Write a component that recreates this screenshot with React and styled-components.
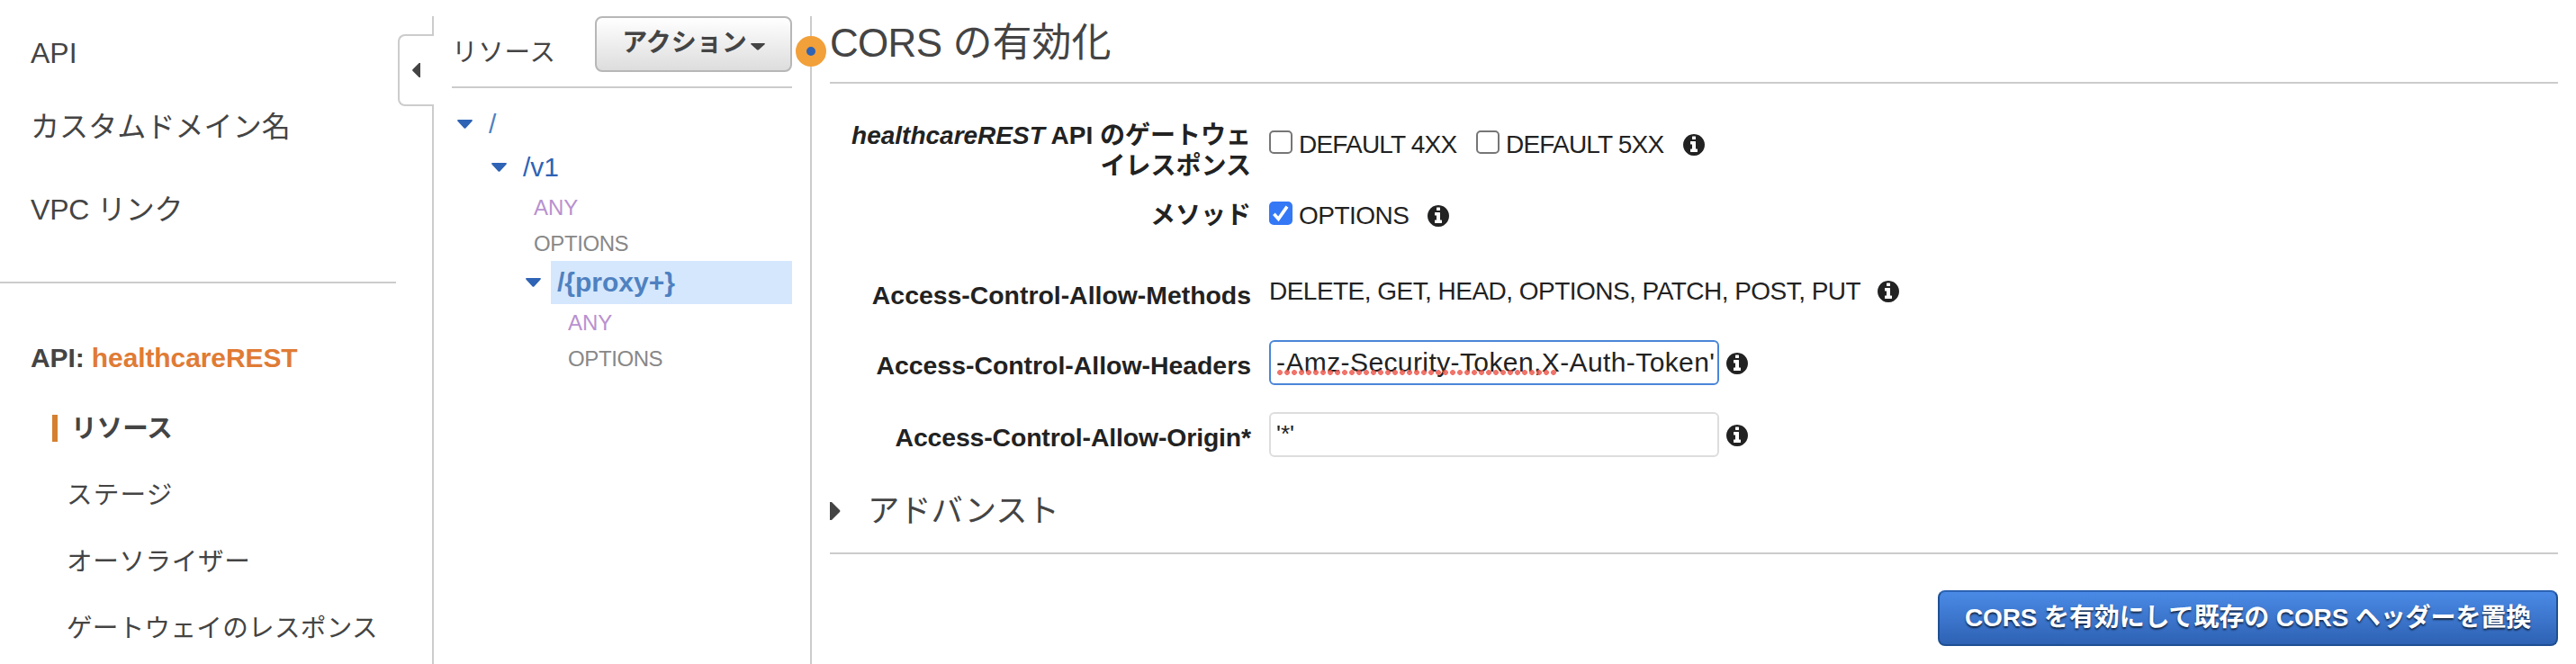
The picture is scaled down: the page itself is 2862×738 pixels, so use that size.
import React from "react";
import styled, { createGlobalStyle } from "styled-components";

const GlobalStyle = createGlobalStyle`
  * { box-sizing: border-box; }
  html, body { margin: 0; padding: 0; background: #fff; }
  body {
    overflow: hidden;
    font-family: "Liberation Sans", "Noto Sans CJK JP", sans-serif;
    color: #444;
  }
`;

const Page = styled.div`
  display: flex;
  width: 2862px;
  height: 738px;
  padding-top: 18px;
  overflow: hidden;
`;

const Sidebar = styled.nav`
  width: 442px;
  flex: none;
`;

const TopLinks = styled.div`
  display: flex;
  flex-direction: column;
  height: 295px;
  padding: 21px 0 0 34px;
`;

const TopLink = styled.a`
  font-size: 32px;
  line-height: 40px;
  letter-spacing: ${(p) => p.$spacing || 0}px;
  margin-bottom: ${(p) => p.$after || 0}px;
  white-space: nowrap;
`;

const Rule = styled.hr`
  width: ${(p) => p.$width || "100%"};
  height: 2px;
  margin: 0;
  border: 0;
  background: #ccc;
`;

const ApiName = styled.h2`
  margin: 63px 0 41px 34px;
  font-size: 30px;
  font-weight: 700;
  line-height: 40px;
  letter-spacing: -0.1px;
  white-space: nowrap;

  span { color: #e07b35; }
`;

const SubLinks = styled.div`
  display: flex;
  flex-direction: column;
  gap: 40px;
`;

const SubLink = styled.a`
  display: flex;
  align-items: center;
  height: 34px;
  padding-left: 74px;
  font-size: 28.6px;
  line-height: 34px;
  letter-spacing: ${(p) => p.$spacing || 0}px;
  white-space: nowrap;
`;

const ActiveLink = styled(SubLink)`
  padding-left: 58px;
  font-weight: 700;

  &::before {
    content: "";
    width: 6px;
    height: 30px;
    margin-right: 15px;
    background: #d58030;
  }
`;

const Divider = styled.div`
  display: flex;
  flex-direction: column;
  flex: none;
  width: 40px;
`;

const DividerLine = styled.div`
  height: ${(p) => p.$height || "auto"};
  flex: ${(p) => (p.$height ? "none" : 1)};
  border-right: 2px solid #ccc;
`;

const CollapseTab = styled.button`
  display: flex;
  align-items: center;
  height: 80px;
  padding: 0 0 0 14px;
  border: 2px solid #ccc;
  border-right: 0;
  border-radius: 8px 0 0 8px;
  background: #fff;
`;

const Tree = styled.section`
  width: 420px;
  flex: none;
  border-right: 2px solid #ccc;
  padding: 0 20px;
`;

const TreeHeader = styled.header`
  display: flex;
  justify-content: space-between;
  height: 78px;
`;

const TreeTitle = styled.h3`
  margin: 23px 0 0;
  font-size: 28.6px;
  font-weight: 400;
  line-height: 34px;
  letter-spacing: 0.7px;
  white-space: nowrap;
`;

const ActionButton = styled.button`
  display: flex;
  align-items: center;
  justify-content: center;
  gap: 4px;
  width: 219px;
  height: 62px;
  padding: 0 0 2px;
  border: 2px solid #b7b7b7;
  border-radius: 8px;
  background: linear-gradient(#fff, #ddd);
  color: #444;
  font: 700 28px/34px "Liberation Sans", "Noto Sans CJK JP", sans-serif;
  white-space: nowrap;

  svg { margin-top: 8px; }
`;

const TreeList = styled.div`
  padding-top: 16px;
`;

const TreeNode = styled.div`
  display: flex;
  align-items: center;
  height: 48px;
  padding-left: ${(p) => 6 + p.$depth * 38}px;
`;

const NodeName = styled.div`
  flex: 1;
  height: 48px;
  margin-left: 11px;
  padding-left: 7px;
  font-size: 30px;
  line-height: 48px;
  color: ${(p) => (p.$light ? "#4f81c0" : "#2e63b5")};
  font-weight: ${(p) => (p.$selected ? 700 : 400)};
  background: ${(p) => (p.$selected ? "#d5e7fd" : "transparent")};
`;

const Method = styled.div`
  height: 40px;
  padding-left: ${(p) => 53 + p.$depth * 38}px;
  font-size: 24px;
  line-height: 41px;
  letter-spacing: ${(p) => (p.$any ? 0 : -0.4)}px;
  color: ${(p) => (p.$any ? "#b991cf" : "#888")};
`;

const Main = styled.main`
  position: relative;
  flex: none;
  width: 1960px;
  padding: 0 20px;
`;

const Handle = styled.span`
  position: absolute;
  left: -18px;
  top: 22px;
  width: 34px;
  height: 34px;
  border: 12px solid #f2a03a;
  border-radius: 50%;
  background: #2e63b5;
`;

const Title = styled.h1`
  height: 73px;
  margin: 0;
  font-size: 44px;
  font-weight: 400;
  line-height: 60px;
  white-space: nowrap;

  span { letter-spacing: -0.7px; }
`;

const FormRow = styled.div`
  display: flex;
  align-items: flex-start;
  gap: 20px;
  height: ${(p) => p.$height}px;
  margin-top: ${(p) => p.$top}px;
  color: #222;
`;

const Label = styled.label`
  width: 468px;
  padding-top: ${(p) => p.$drop || 0}px;
  font-size: ${(p) => p.$size || 28.4}px;
  font-weight: 700;
  line-height: 34px;
  letter-spacing: ${(p) => p.$spacing || 0}px;
  text-align: right;
  white-space: nowrap;
`;

const Field = styled.div`
  display: flex;
  align-items: flex-start;
  padding-top: ${(p) => p.$drop || 0}px;
  font-size: 28px;
  line-height: 34px;
  white-space: nowrap;
`;

const CheckBox = styled.span`
  display: flex;
  width: 26px;
  height: 26px;
  margin: 1px 7px 0 0;
  border: 2px solid ${(p) => (p.$checked ? "#3478f6" : "#767676")};
  border-radius: 5px;
  background: ${(p) => (p.$checked ? "#3478f6" : "#fff")};
`;

const CheckText = styled.span`
  width: ${(p) => p.$width}px;
  letter-spacing: ${(p) => p.$spacing}px;
`;

const MethodsText = styled.span`
  width: 676px;
  letter-spacing: -0.53px;
`;

const InfoSvg = styled.svg`
  flex: none;
  width: 24px;
  height: 24px;
  margin-top: ${(p) => p.$drop}px;
`;

const TextBox = styled.div`
  width: 500px;
  height: 50px;
  margin-right: 8px;
  padding: ${(p) => (p.$focused ? "6px 0 0 6px" : "5px 0 0 6px")};
  border: 2px solid ${(p) => (p.$focused ? "#4a86d8" : "#ddd")};
  border-radius: 6px;
  font-size: ${(p) => (p.$focused ? 30 : 26)}px;
  letter-spacing: ${(p) => (p.$focused ? 0.4 : 0)}px;
  line-height: 34px;
  overflow: hidden;
`;

const Misspelled = styled.span`
  position: relative;

  &::after {
    content: "";
    position: absolute;
    left: 0;
    top: 25px;
    width: 312px;
    height: 6px;
    background: radial-gradient(circle, rgba(238, 92, 80, 0.85) 2.6px, transparent 3.2px) 0 0 / 8px 6px repeat-x;
  }
`;

const Advanced = styled.div`
  display: flex;
  align-items: center;
  gap: 30px;
  height: 66px;
  margin-top: 40px;
  padding-bottom: 26px;
  font-size: 35.3px;
  line-height: 40px;
  white-space: nowrap;
`;

const Footer = styled.footer`
  display: flex;
  justify-content: flex-end;
  padding-top: 40px;
`;

const PrimaryButton = styled.button`
  width: 689px;
  height: 62px;
  padding: 0;
  border: 2px solid #1f4f93;
  border-top-color: #2c63b4;
  border-radius: 8px;
  background: linear-gradient(#4a8ae6, #2e62b4);
  color: #fff;
  font: 700 28px/34px "Liberation Sans", "Noto Sans CJK JP", sans-serif;
  letter-spacing: -0.12px;
  text-shadow: 0 2px 2px rgba(0, 0, 0, 0.65);
  white-space: nowrap;
`;

const Info = ({ drop = 5 }) => (
  <InfoSvg viewBox="0 128 1536 1536" $drop={drop}>
    <path
      fill="#222"
      d="M1024 1376v-160q0-14-9-23t-23-9h-96v-512q0-14-9-23t-23-9h-320q-14 0-23 9t-9 23v160q0 14 9 23t23 9h96v320h-96q-14 0-23 9t-9 23v160q0 14 9 23t23 9h448q14 0 23-9t9-23zm-128-896v-160q0-14-9-23t-23-9h-192q-14 0-23 9t-9 23v160q0 14 9 23t23 9h192q14 0 23-9t9-23zm640 416q0 209-103 385.5t-279.5 279.5-385.5 103-385.5-103-279.5-279.5-103-385.5 103-385.5 279.5-279.5 385.5-103 385.5 103 279.5 279.5 103 385.5z"
    />
  </InfoSvg>
);

const Caret = ({ width = 17, height = 10, color = "#2e63b5" }) => (
  <svg width={width} height={height} viewBox="0 0 17 10" preserveAspectRatio="none">
    <path d="M0.3 0H16.7V1.6L9.6 9.2Q8.5 10.4 7.4 9.2L0.3 1.6Z" fill={color} />
  </svg>
);

const Check = ({ checked }) => (
  <CheckBox $checked={checked}>
    {checked && (
      <svg width="22" height="22" viewBox="0 0 22 22">
        <path d="M3.4 11.8L8.4 17.4L18 3.6" fill="none" stroke="#fff" strokeWidth="3.6" />
      </svg>
    )}
  </CheckBox>
);

export default function App() {
  return (
    <>
      <GlobalStyle />
      <Page>
        <Sidebar>
          <TopLinks>
            <TopLink $after={42}>API</TopLink>
            <TopLink $after={52} $spacing={0.1}>カスタムドメイン名</TopLink>
            <TopLink $spacing={-0.2}>VPC リンク</TopLink>
          </TopLinks>
          <Rule $width="440px" />
          <ApiName>
            API: <span>healthcareREST</span>
          </ApiName>
          <SubLinks>
            <ActiveLink>リソース</ActiveLink>
            <SubLink $spacing={1.2}>ステージ</SubLink>
            <SubLink $spacing={0.6}>オーソライザー</SubLink>
            <SubLink $spacing={0.27}>ゲートウェイのレスポンス</SubLink>
          </SubLinks>
        </Sidebar>

        <Divider>
          <DividerLine $height="20px" />
          <CollapseTab>
            <svg width="9" height="16" viewBox="0 0 9 16">
              <path d="M9 0V16H7.6L0.6 9Q-0.4 8 0.6 7L7.6 0Z" fill="#444" />
            </svg>
          </CollapseTab>
          <DividerLine />
        </Divider>

        <Tree>
          <TreeHeader>
            <TreeTitle>リソース</TreeTitle>
            <ActionButton>
              アクション
              <Caret width={16} height={8} color="#444" />
            </ActionButton>
          </TreeHeader>
          <Rule />
          <TreeList>
            <TreeNode $depth={0}>
              <Caret />
              <NodeName $light>/</NodeName>
            </TreeNode>
            <TreeNode $depth={1}>
              <Caret />
              <NodeName>/v1</NodeName>
            </TreeNode>
            <Method $depth={1} $any>ANY</Method>
            <Method $depth={1}>OPTIONS</Method>
            <TreeNode $depth={2}>
              <Caret />
              <NodeName $light $selected>/&#123;proxy+&#125;</NodeName>
            </TreeNode>
            <Method $depth={2} $any>ANY</Method>
            <Method $depth={2}>OPTIONS</Method>
          </TreeList>
        </Tree>

        <Main>
          <Handle />
          <Title>
            <span>CORS</span> の有効化
          </Title>
          <Rule />
          <FormRow $top={41} $height={68}>
            <Label $size={28}>
              <em>healthcareREST</em> API のゲートウェ
              <br />
              イレスポンス
            </Label>
            <Field $drop={10}>
              <Check />
              <CheckText $width={197} $spacing={-0.8}>DEFAULT 4XX</CheckText>
              <Check />
              <CheckText $width={197} $spacing={-0.8}>DEFAULT 5XX</CheckText>
              <Info />
            </Field>
          </FormRow>
          <FormRow $top={21} $height={34}>
            <Label $size={28}>メソッド</Label>
            <Field>
              <Check checked />
              <CheckText $width={143} $spacing={-0.5}>OPTIONS</CheckText>
              <Info />
            </Field>
          </FormRow>
          <FormRow $top={50} $height={38}>
            <Label $drop={4}>Access-Control-Allow-Methods</Label>
            <Field>
              <MethodsText>DELETE, GET, HEAD, OPTIONS, PATCH, POST, PUT</MethodsText>
              <Info />
            </Field>
          </FormRow>
          <FormRow $top={33} $height={50}>
            <Label $drop={11}>Access-Control-Allow-Headers</Label>
            <Field>
              <TextBox $focused>
                <Misspelled>-Amz-Security-Token,X</Misspelled>-Auth-Token'
              </TextBox>
              <Info drop={14} />
            </Field>
          </FormRow>
          <FormRow $top={30} $height={50}>
            <Label $drop={11} $spacing={-0.13}>Access-Control-Allow-Origin*</Label>
            <Field>
              <TextBox>'*'</TextBox>
              <Info drop={14} />
            </Field>
          </FormRow>
          <Advanced>
            <svg width="12" height="20" viewBox="0 0 12 20">
              <path d="M0 0H2L11 9Q12 10 11 11L2 20H0Z" fill="#444" />
            </svg>
            アドバンスト
          </Advanced>
          <Rule />
          <Footer>
            <PrimaryButton>CORS を有効にして既存の CORS ヘッダーを置換</PrimaryButton>
          </Footer>
        </Main>
      </Page>
    </>
  );
}
